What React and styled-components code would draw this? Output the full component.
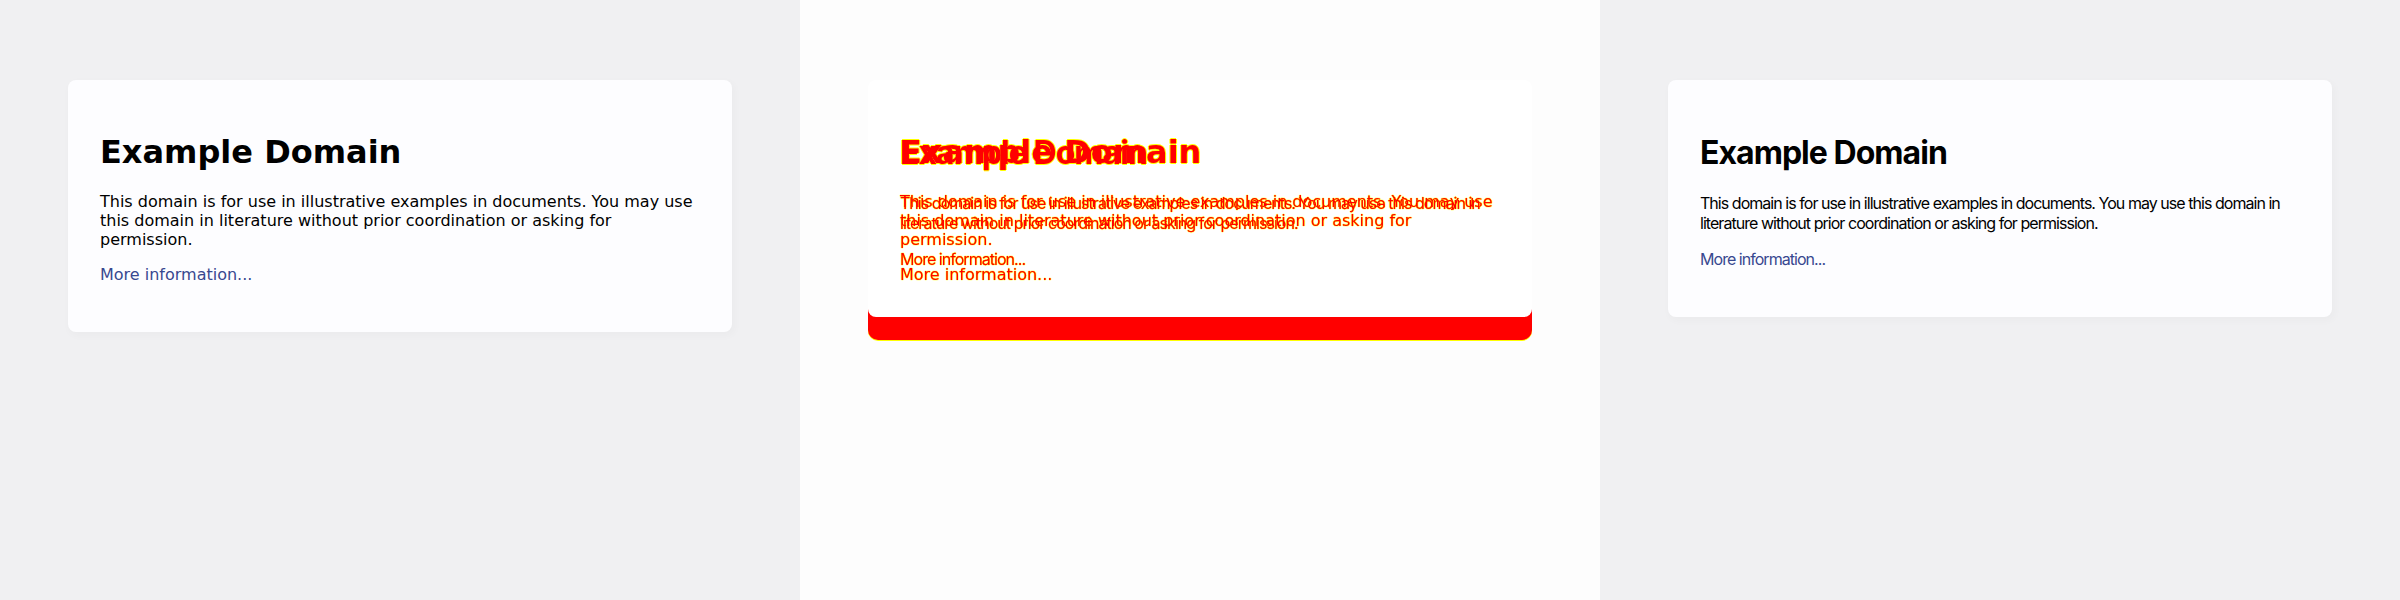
import styled, { createGlobalStyle, css } from 'styled-components';

// expected | diff | actual, each render of the same example.com card
const GlobalStyle = createGlobalStyle`
  html, body {
    margin: 0;
    padding: 0;
  }
  body {
    background: #fdfdfd;
  }
`;

const fonts = {
  expected: '"DejaVu Sans", sans-serif',
  actual: 'Inter, "Liberation Sans", sans-serif',
};

const Strip = styled.div`
  display: flex;
  width: 2400px;
  height: 600px;
  overflow: hidden;
`;

const Panel = styled.section`
  flex: none;
  width: 800px;
  height: 600px;
  box-sizing: border-box;
  padding-top: 80px;
  display: flex;
  flex-direction: column;
  align-items: center;
  background: ${({ $diff }) => ($diff ? '#fdfdfd' : '#f0f0f2')};
`;

const Card = styled.div`
  position: relative;
  z-index: 1;
  width: 600px;
  padding: 32px;
  border-radius: 8px;
  background: #fdfdff;
  box-shadow: 2px 3px 7px 2px rgba(0, 0, 0, 0.02);

  ${({ $diff }) => $diff && css`
    background: #ffffff;
    box-shadow: none;
  `}
`;

// the strip of the taller card that only the expected render has
const MissingEdge = styled.div`
  width: 664px;
  height: 31px;
  margin-top: -8px;
  border-radius: 0 0 10px 10px;
  background: #ff0000;
  box-shadow: 0 1px 0 #ffff00;
`;

const Layer = styled.div`
  ${({ $diff }) => $diff && css`
    mix-blend-mode: darken;
  `}

  ${({ $overlay }) => $overlay && css`
    position: absolute;
    top: 32px;
    left: 32px;
    right: 32px;
  `}
`;

const headingInk = css`
  color: #ff0000;
  text-shadow: 1px 0 #ffff00, -1px 0 #ffff00, 0 1px #ffff00, 0 -1px #ffff00;
`;

const bodyInk = css`
  color: #ff0000;
  text-shadow: 0 0 1px #ffff00, 0 0 1px #ffff00, 0 0 1px #ffff00;
`;

const Title = styled.h1`
  margin: 21px 0;
  font-family: ${({ $font }) => fonts[$font]};
  font-size: 32px;
  font-weight: 700;
  letter-spacing: ${({ $font }) => ($font === 'actual' ? '-0.03em' : '0')};
  color: #000;
  ${({ $diff }) => $diff && headingInk}
`;

const Text = styled.p`
  margin: 16px 0;
  font-family: ${({ $font }) => fonts[$font]};
  font-size: 16px;
  letter-spacing: ${({ $font }) => ($font === 'actual' ? '-0.06em' : '0')};
  color: #000;
  ${({ $diff }) => $diff && bodyInk}
`;

const Link = styled.a`
  color: #38488f;
  text-decoration: none;
  ${({ $diff }) => $diff && bodyInk}
`;

const Content = ({ font, diff, overlay }) => (
  <Layer $diff={diff} $overlay={overlay}>
    <Title $font={font} $diff={diff}>Example Domain</Title>
    <Text $font={font} $diff={diff}>
      This domain is for use in illustrative examples in documents. You may use this
      domain in literature without prior coordination or asking for permission.
    </Text>
    <Text $font={font} $diff={diff}>
      <Link $diff={diff} href="#">More information...</Link>
    </Text>
  </Layer>
);

export default function App() {
  return (
    <>
      <GlobalStyle />
      <Strip>
        <Panel>
          <Card>
            <Content font="expected" />
          </Card>
        </Panel>
        <Panel $diff>
          <Card $diff>
            <Content font="actual" diff />
            <Content font="expected" diff overlay />
          </Card>
          <MissingEdge />
        </Panel>
        <Panel>
          <Card>
            <Content font="actual" />
          </Card>
        </Panel>
      </Strip>
    </>
  );
}
